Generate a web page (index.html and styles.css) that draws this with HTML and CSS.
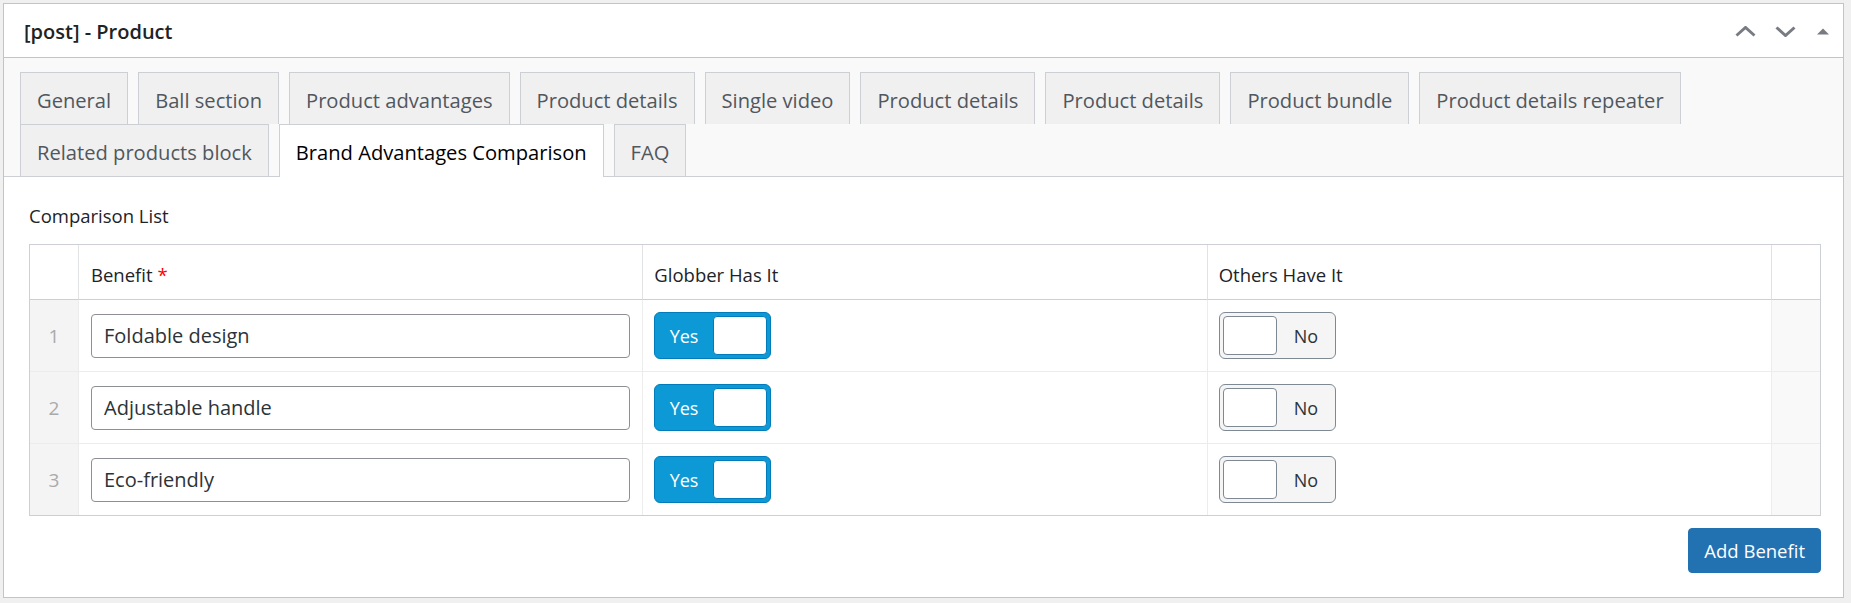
FILE: index.html
```html
<!DOCTYPE html>
<html lang="en">
<head>
<meta charset="utf-8">
<title>[post] - Product</title>
<link rel="stylesheet" href="styles.css">
</head>
<body>
<div class="postbox">
  <div class="postbox-header">
    <h2 class="postbox-title">[post] - Product</h2>
    <div class="handle-actions">
      <button class="handle-btn" type="button" aria-label="Move up">
        <svg width="21" height="11" viewBox="0 0 21 11"><polyline class="chev" points="1.5,9.5 10.5,1.5 19.5,9.5"/></svg>
      </button>
      <button class="handle-btn" type="button" aria-label="Move down">
        <svg width="21" height="11" viewBox="0 0 21 11"><polyline class="chev" points="1.5,1.5 10.5,9.5 19.5,1.5"/></svg>
      </button>
      <button class="handle-btn" type="button" aria-label="Toggle panel">
        <svg width="12" height="7" viewBox="0 0 12 7"><polygon class="tri" points="0,6.5 6,0.5 12,6.5"/></svg>
      </button>
    </div>
  </div>

  <div class="inside">
    <ul class="tab-group">
      <li><a href="#">General</a></li>
      <li><a href="#">Ball section</a></li>
      <li><a href="#">Product advantages</a></li>
      <li><a href="#">Product details</a></li>
      <li><a href="#">Single video</a></li>
      <li><a href="#">Product details</a></li>
      <li><a href="#">Product details</a></li>
      <li><a href="#">Product bundle</a></li>
      <li><a href="#">Product details repeater</a></li>
      <li><a href="#">Related products block</a></li>
      <li class="active"><a href="#">Brand Advantages Comparison</a></li>
      <li><a href="#">FAQ</a></li>
    </ul>

    <div class="fields">
      <div class="field-label">Comparison List</div>
      <table class="repeater">
        <thead>
          <tr>
            <th class="row-handle"></th>
            <th>Benefit <span class="required">*</span></th>
            <th class="switch-col">Globber Has It</th>
            <th class="switch-col">Others Have It</th>
            <th class="row-handle"></th>
          </tr>
        </thead>
        <tbody>
          <tr>
            <td class="row-handle order">1</td>
            <td><input class="text-input" type="text" value="Foldable design"></td>
            <td class="switch-col"><div class="switch on"><span class="on-text">Yes</span><span class="off-text">No</span><div class="slider"></div></div></td>
            <td class="switch-col"><div class="switch"><span class="on-text">Yes</span><span class="off-text">No</span><div class="slider"></div></div></td>
            <td class="row-handle remove"></td>
          </tr>
          <tr>
            <td class="row-handle order">2</td>
            <td><input class="text-input" type="text" value="Adjustable handle"></td>
            <td class="switch-col"><div class="switch on"><span class="on-text">Yes</span><span class="off-text">No</span><div class="slider"></div></div></td>
            <td class="switch-col"><div class="switch"><span class="on-text">Yes</span><span class="off-text">No</span><div class="slider"></div></div></td>
            <td class="row-handle remove"></td>
          </tr>
          <tr>
            <td class="row-handle order">3</td>
            <td><input class="text-input" type="text" value="Eco-friendly"></td>
            <td class="switch-col"><div class="switch on"><span class="on-text">Yes</span><span class="off-text">No</span><div class="slider"></div></div></td>
            <td class="switch-col"><div class="switch"><span class="on-text">Yes</span><span class="off-text">No</span><div class="slider"></div></div></td>
            <td class="row-handle remove"></td>
          </tr>
        </tbody>
      </table>
      <div class="actions">
        <button class="button-primary" type="button">Add Benefit</button>
      </div>
    </div>
  </div>
</div>
</body>
</html>
```

FILE: styles.css
```css
* {
  box-sizing: border-box;
}

html,
body {
  margin: 0;
}

body {
  background: #f0f0f1;
  padding: 3px 0 0 3px;
  font-family: "Open Sans", "Noto Sans", sans-serif;
  color: #1d2327;
}

/* Meta box shell */
.postbox {
  width: 1841px;
  background: #fff;
  border: 1px solid #c3c4c7;
}

.postbox-header {
  display: flex;
  justify-content: space-between;
  align-items: stretch;
  height: 54px;
  border-bottom: 1px solid #c3c4c7;
}

.postbox-title {
  margin: 0;
  padding: 14px 20px 0;
  font-size: 20px;
  line-height: 27px;
  font-weight: 600;
  color: #1d2327;
}

.handle-actions {
  display: flex;
  padding-right: 1px;
}

.handle-btn {
  width: 38px;
  padding: 2px 0 0;
  margin: 0;
  border: 0;
  background: transparent;
  display: flex;
  align-items: center;
  justify-content: center;
}

.handle-btn:first-child {
  padding-right: 3px;
}

.handle-btn svg {
  display: block;
}

.chev {
  fill: none;
  stroke: #787c82;
  stroke-width: 3;
}

.tri {
  fill: #787c82;
}

/* Tabs */
.tab-group {
  list-style: none;
  margin: 0;
  padding: 14px 16px 0;
  display: flex;
  flex-wrap: wrap;
  background: #f9f9f9;
  border-bottom: 1px solid #ccd0d4;
}

.tab-group li {
  margin: 0 10px 0 0;
}

.tab-group a {
  display: block;
  padding: 14px 16px 10px;
  font-size: 20.15px;
  line-height: 27px;
  color: #50575e;
  background: #f0f0f0;
  border: 1px solid #ccd0d4;
  border-bottom: 0;
  text-decoration: none;
}

.tab-group li.active a {
  background: #fff;
  color: #000;
  padding-bottom: 11px;
  margin-bottom: -1px;
}

/* Field area */
.fields {
  padding: 27px 22px 24px 25px;
}

.field-label {
  font-size: 18.5px;
  line-height: 24px;
  color: #1d2327;
  margin-bottom: 16px;
}

.repeater {
  width: 100%;
  table-layout: fixed;
  border-collapse: separate;
  border-spacing: 0;
  border: 1px solid #ccd0d4;
}

.repeater th {
  text-align: left;
  font-weight: 400;
  font-size: 18.5px;
  line-height: 24px;
  color: #1d2327;
  padding: 18px 12px 12px;
  border-bottom: 1px solid #ccd0d4;
  border-left: 1px solid #e1e2e4;
}

.repeater td {
  padding: 12px;
  vertical-align: middle;
  border-left: 1px solid #ececec;
}

.repeater .switch-col {
  padding-left: 11px;
}

.repeater tbody tr + tr td {
  border-top: 1px solid #ececec;
}

.repeater th:first-child,
.repeater td:first-child {
  border-left: 0;
}

.repeater .row-handle {
  width: 48px;
  padding: 0;
  text-align: center;
}

.repeater th.row-handle:last-child,
.repeater td.row-handle:last-child {
  width: 49px;
}

.row-handle.order {
  background: #f4f4f4;
  color: #aaa;
  font-size: 19px;
}

.row-handle.remove {
  background: #f9f9f9;
}

.required {
  color: #f00;
}

.text-input {
  display: block;
  width: 100%;
  height: 44px;
  margin: 0;
  padding: 0 12px;
  border: 1px solid #8c8f94;
  border-radius: 4px;
  background: #fff;
  font-family: "Open Sans", "Noto Sans", sans-serif;
  font-size: 20px;
  color: #2c3338;
}

/* On/off switch */
.switch {
  position: relative;
  display: flex;
  width: 117px;
  height: 47px;
  border: 1px solid #7e8993;
  border-radius: 6px;
  background: #f5f5f5;
}

.switch span {
  flex: 1;
  display: flex;
  align-items: center;
  justify-content: center;
  font-size: 18px;
  color: #2c3338;
}

.switch .on-text {
  color: #fff;
}

.switch .slider {
  position: absolute;
  top: 3px;
  bottom: 3px;
  left: 3px;
  right: 50%;
  background: #fff;
  border: 1px solid #7e8993;
  border-radius: 4px;
}

.switch.on {
  background: #0d99d5;
  border-color: #007cba;
}

.switch.on .slider {
  left: 50%;
  right: 3px;
  border-color: #007cba;
}

/* Footer action */
.actions {
  display: flex;
  justify-content: flex-end;
  margin-top: 12px;
}

.button-primary {
  height: 45px;
  margin: 0;
  padding: 0 15px;
  border: 1px solid #2271b1;
  border-radius: 4px;
  background: #2271b1;
  color: #fff;
  font-family: "Open Sans", "Noto Sans", sans-serif;
  font-size: 18.5px;
  line-height: 43px;
}
```
